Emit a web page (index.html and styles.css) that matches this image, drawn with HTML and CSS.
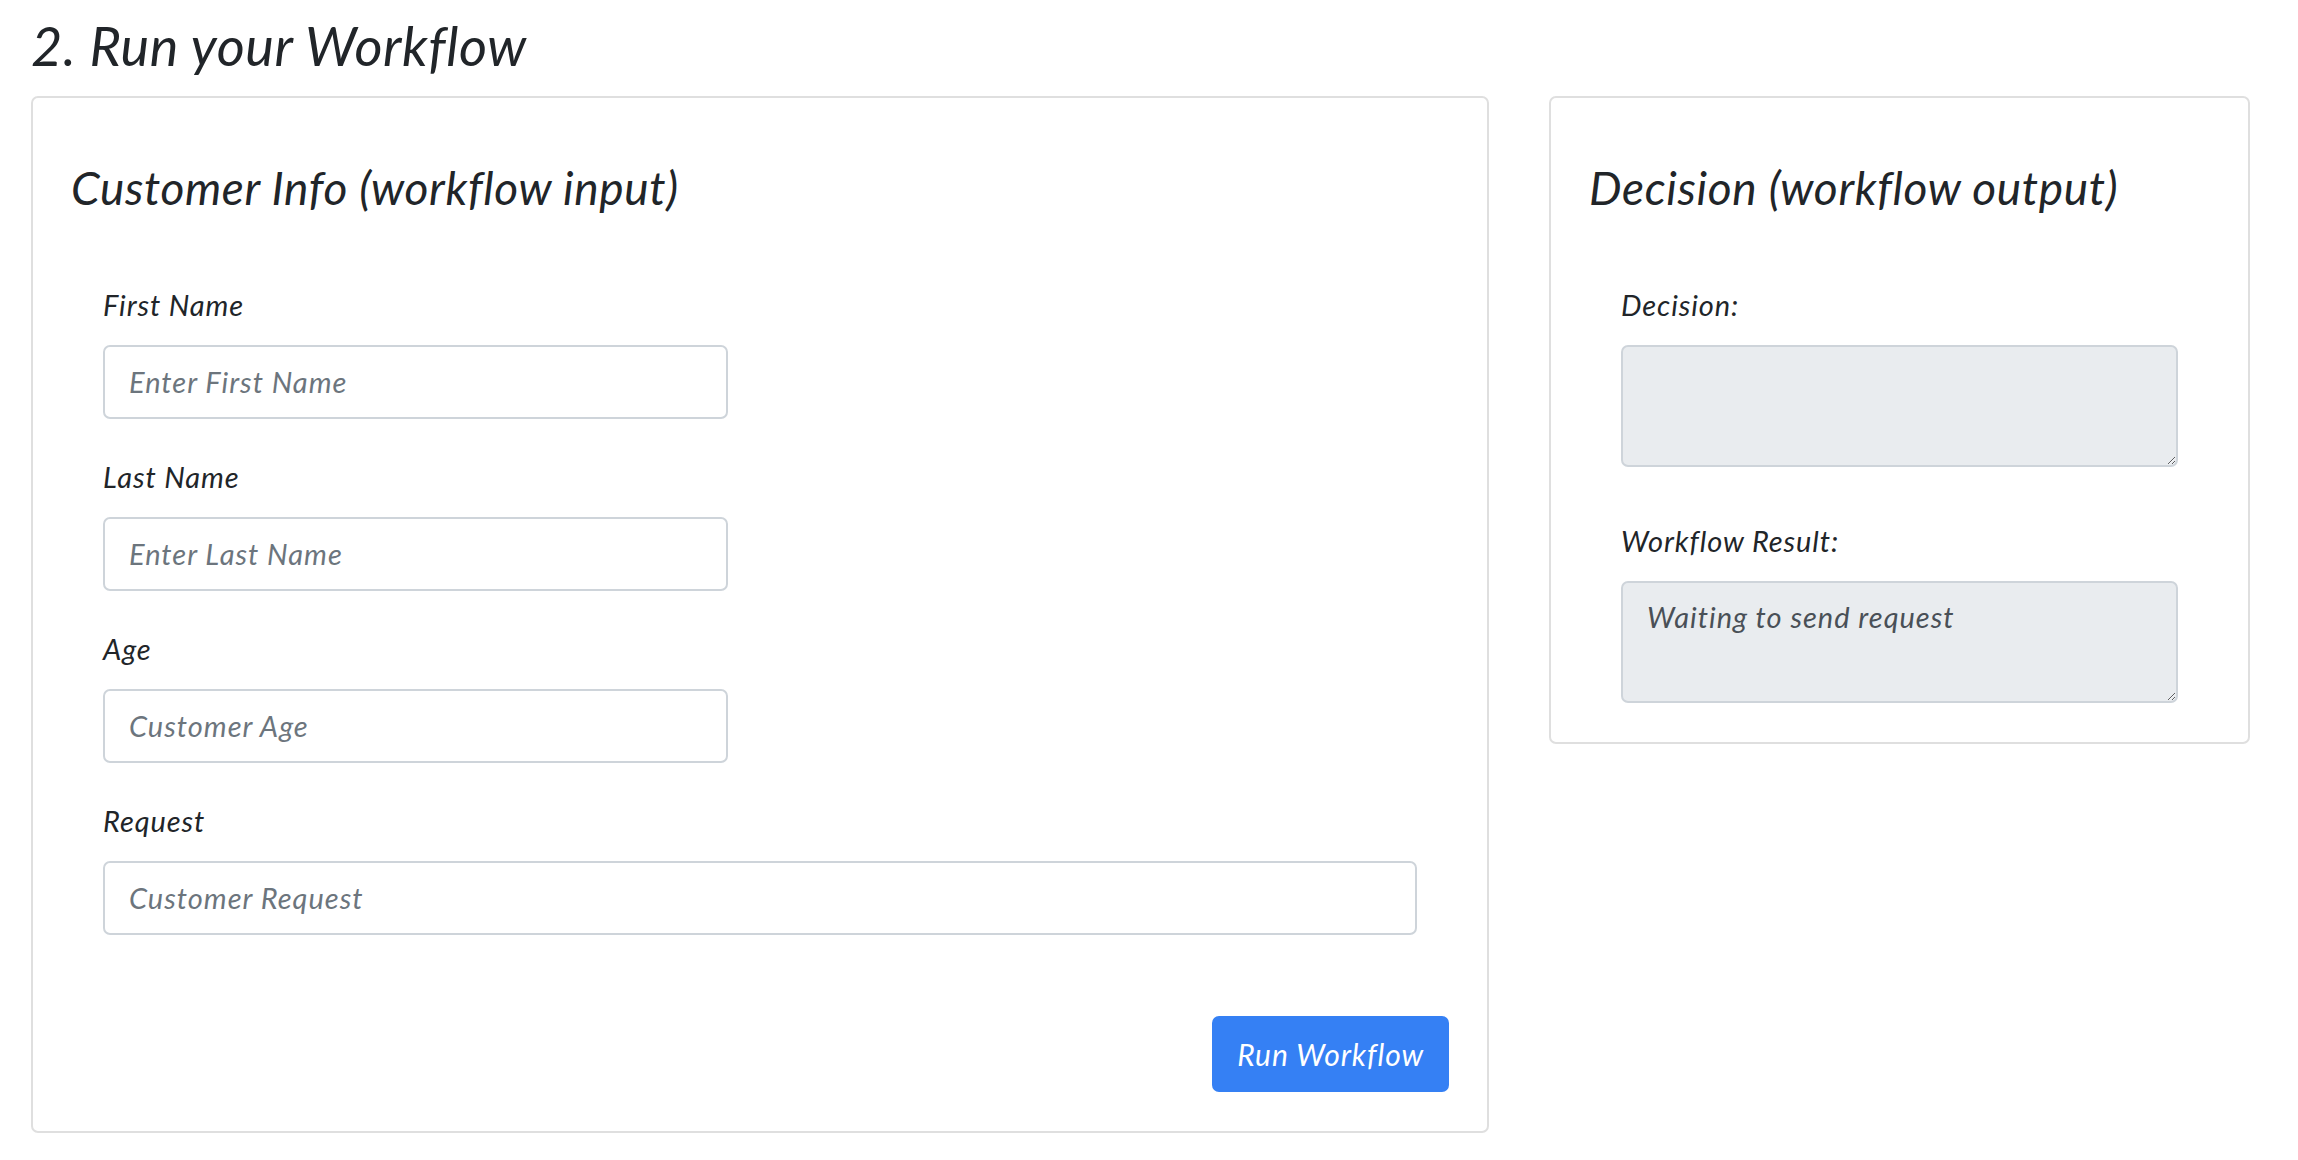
FILE: index.html
```html
<!DOCTYPE html>
<html lang="en">

<head>
    <meta charset="UTF-8">
    <meta name="viewport" content="width=device-width, initial-scale=1.0">
    <title>Run your Workflow</title>
    <link rel="stylesheet" href="styles.css">
</head>

<body>
    <main class="page">
        <h2 class="page-title">2. Run your Workflow</h2>
        <div class="panels">
            <section class="card">
                <h3 class="card-title">Customer Info (workflow input)</h3>
                <form class="form" onsubmit="return false;">
                    <div class="field">
                        <label for="firstName">First Name</label>
                        <input id="firstName" class="control half" type="text" placeholder="Enter First Name">
                    </div>
                    <div class="field">
                        <label for="lastName">Last Name</label>
                        <input id="lastName" class="control half" type="text" placeholder="Enter Last Name">
                    </div>
                    <div class="field">
                        <label for="age">Age</label>
                        <input id="age" class="control half" type="text" placeholder="Customer Age">
                    </div>
                    <div class="field">
                        <label for="request">Request</label>
                        <input id="request" class="control" type="text" placeholder="Customer Request">
                    </div>
                </form>
                <div class="actions">
                    <button class="btn" type="button">Run Workflow</button>
                </div>
            </section>
            <section class="card card-output">
                <h3 class="card-title">Decision (workflow output)</h3>
                <div class="form">
                    <div class="field">
                        <label for="decision">Decision:</label>
                        <textarea id="decision" class="control output" readonly></textarea>
                    </div>
                    <div class="field">
                        <label for="result">Workflow Result:</label>
                        <textarea id="result" class="control output" readonly>Waiting to send request</textarea>
                    </div>
                </div>
            </section>
        </div>
    </main>
</body>

</html>
```

FILE: styles.css
```css
body {
    font-family: "Lato", "Open Sans", sans-serif;
    font-style: italic;
    margin: 0;
    padding: 0;
    background: #fff;
    color: #212529;
}

.page {
    padding: 14px 48px 0 31px;
}

.page-title {
    font-size: 54px;
    font-weight: 400;
    line-height: 1.2;
    letter-spacing: 0.6px;
    margin: 0 0 17px;
}

.panels {
    display: grid;
    grid-template-columns: 1458px 701px;
    column-gap: 60px;
    align-items: start;
}

.card {
    border: 2px solid #dfdfdf;
    border-radius: 7px;
    padding: 36px 38px 39px;
}

.card-title {
    font-size: 46px;
    font-weight: 400;
    line-height: 1.2;
    letter-spacing: 0.65px;
    margin: 26px 0 0;
}

.form {
    padding: 68px 32px 0;
}

.field {
    margin-bottom: 36px;
}

.field:last-child {
    margin-bottom: 0;
}

.card-output .field {
    margin-bottom: 52px;
}

.card-output .field:last-child {
    margin-bottom: 0;
}

.field label {
    display: block;
    font-size: 29px;
    line-height: 44px;
    letter-spacing: 0.9px;
    margin-bottom: 18px;
}

.control {
    display: block;
    box-sizing: border-box;
    width: 100%;
    height: 74px;
    padding: 0 24px;
    border: 2px solid #ced4da;
    border-radius: 7px;
    background: #fff;
    font-family: inherit;
    font-style: italic;
    font-size: 29px;
    line-height: 1.5;
    letter-spacing: 1px;
    color: #495057;
    outline: none;
}

.control::placeholder {
    color: #6c757d;
}

.half {
    width: 625px;
}

.output {
    height: 122px;
    padding: 12px 24px;
    background: #e9ecef;
    resize: vertical;
}

.actions {
    display: flex;
    justify-content: flex-end;
    margin-top: 81px;
}

.btn {
    height: 76px;
    padding: 0 25px;
    border: none;
    border-radius: 7px;
    background: #3580f4;
    color: #fff;
    font-family: inherit;
    font-style: italic;
    font-size: 30px;
    letter-spacing: 0.9px;
    cursor: pointer;
}
```
